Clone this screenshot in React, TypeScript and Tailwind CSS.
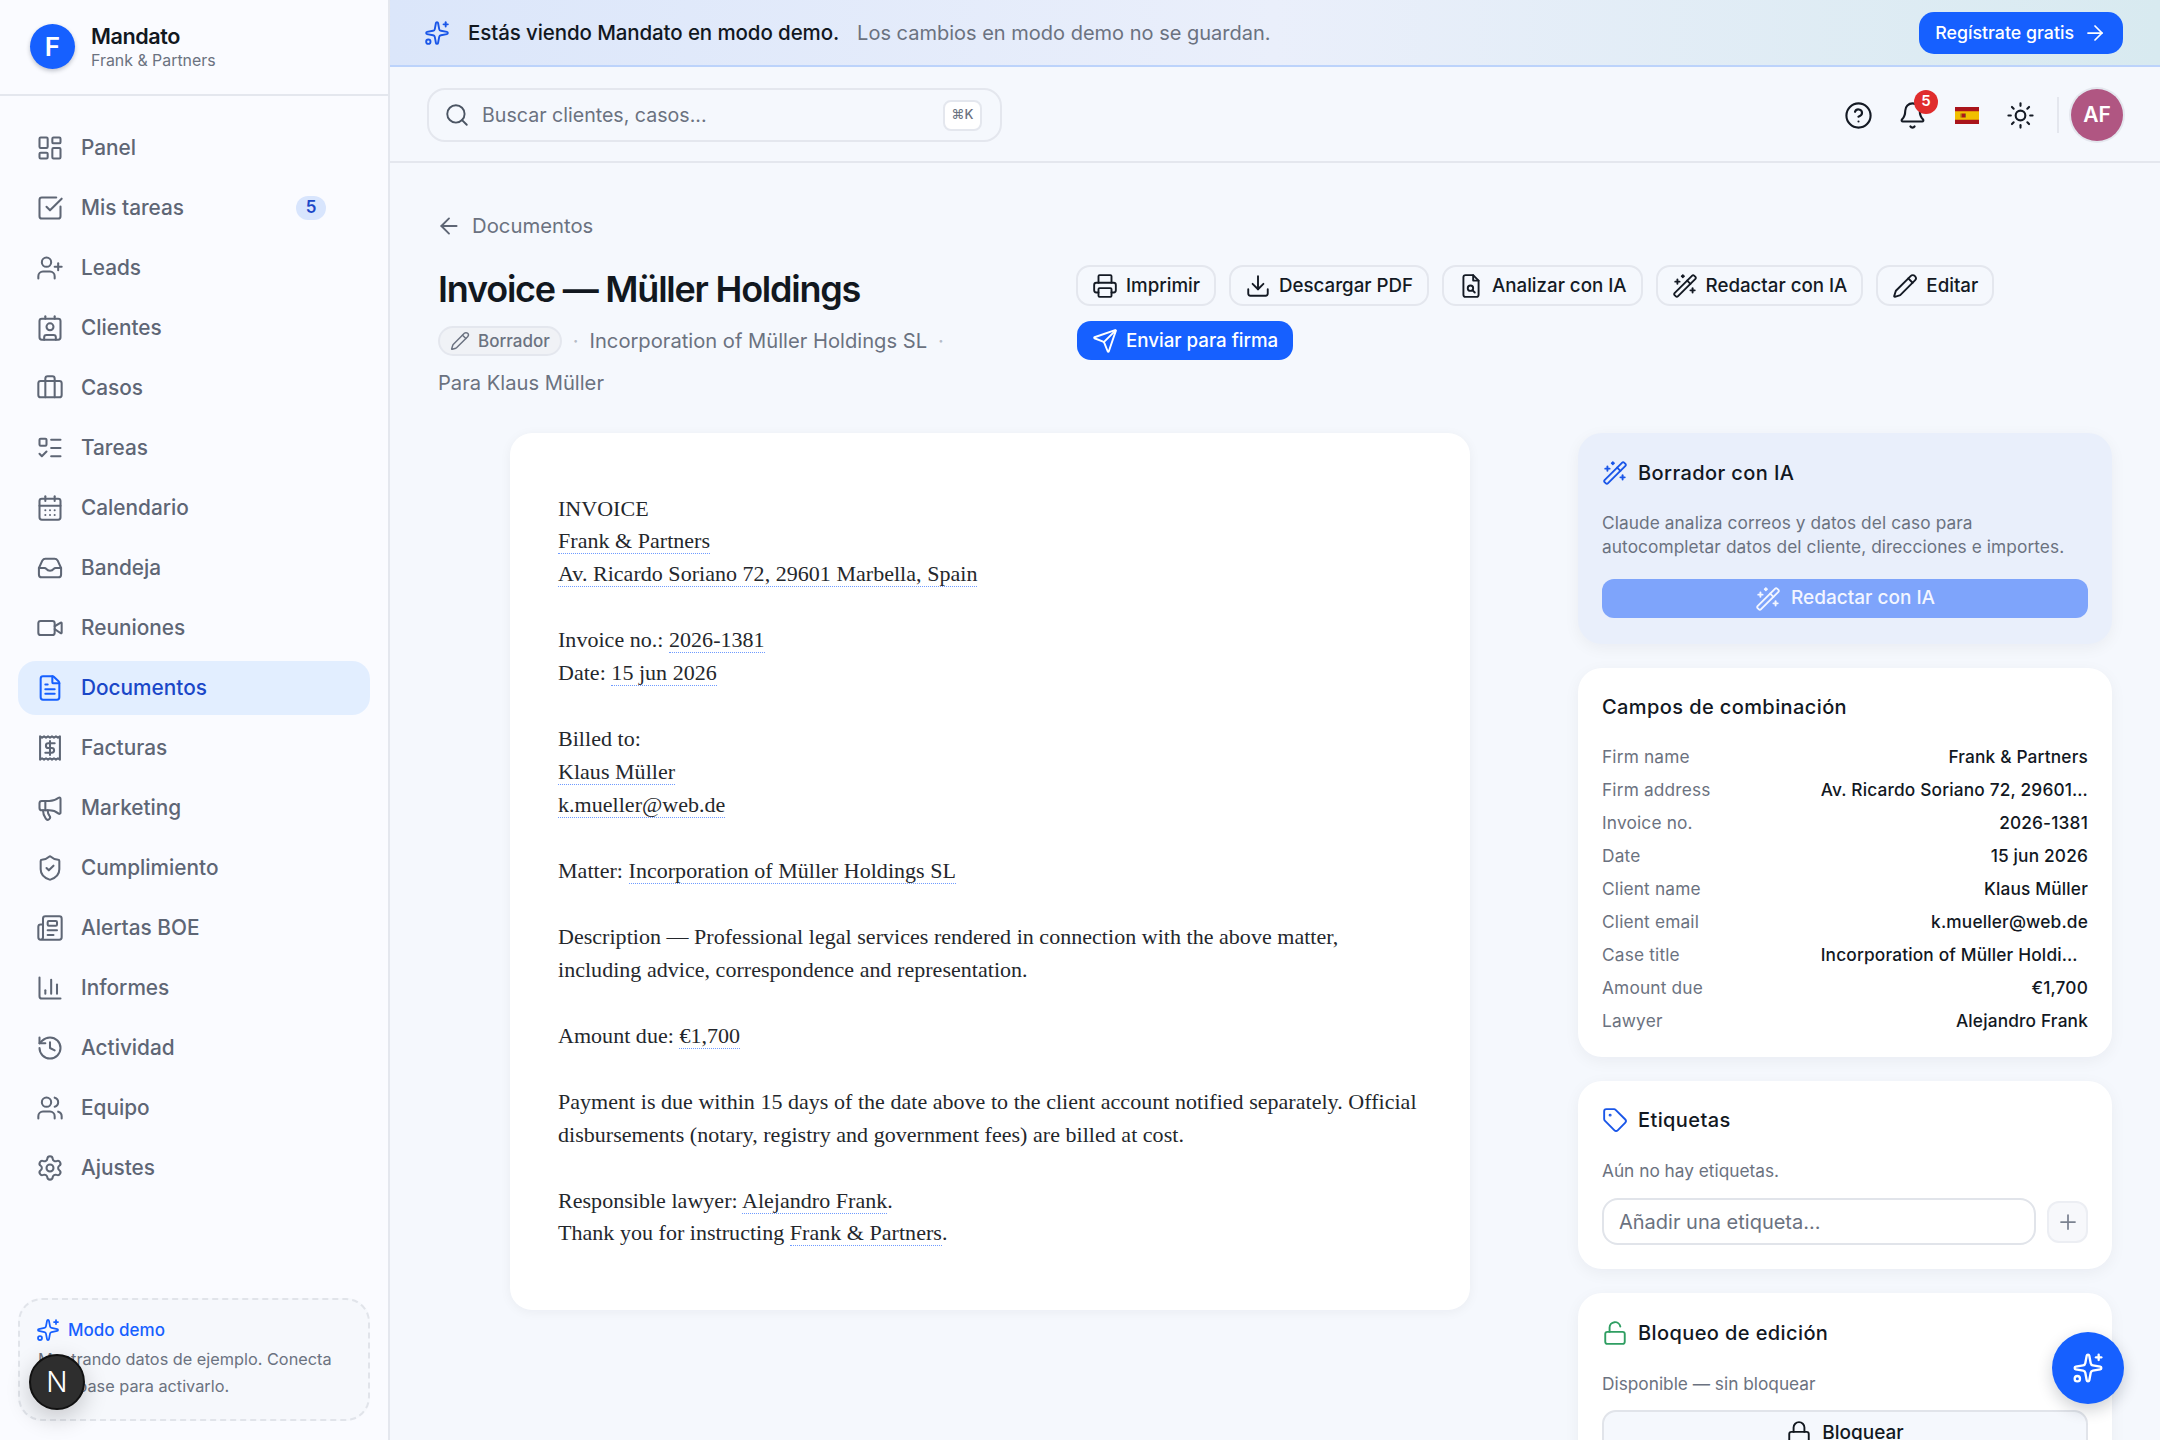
import {
  ArrowLeft,
  ArrowRight,
  Bell,
  Briefcase,
  CalendarDays,
  ChartColumn,
  CircleHelp,
  Contact,
  Download,
  FileText,
  History,
  LayoutDashboard,
  ListTodo,
  Lock,
  LockOpen,
  Megaphone,
  Newspaper,
  Pencil,
  Plus,
  Printer,
  Search,
  Send,
  Settings,
  ShieldCheck,
  Sparkles,
  SquareCheckBig,
  Sun,
  Tag,
  UserPlus,
  Users,
  Video,
  WandSparkles,
} from "lucide-react";
import type { ReactNode, SVGProps } from "react";

function InboxIcon(props: SVGProps<SVGSVGElement>) {
  return (
    <svg viewBox="0 0 24 24" fill="none" stroke="currentColor" strokeWidth={1.75} strokeLinecap="round" strokeLinejoin="round" {...props}>
      <path d="M2.5 12v5.5a2.5 2.5 0 0 0 2.5 2.5h14a2.5 2.5 0 0 0 2.5-2.5V12l-3-6.5A3 3 0 0 0 15.8 4H8.2a3 3 0 0 0-2.7 1.5L2.5 12Z" />
      <path d="M2.5 12h4.7a2 2 0 0 1 1.6.8 4 4 0 0 0 6.4 0 2 2 0 0 1 1.6-.8h4.7" />
    </svg>
  );
}

function ReceiptIcon(props: SVGProps<SVGSVGElement>) {
  return (
    <svg viewBox="0 0 24 24" fill="none" stroke="currentColor" strokeWidth={1.75} strokeLinecap="round" strokeLinejoin="round" {...props}>
      <path d="M3.5 2l1.7 1.2L6.9 2l1.7 1.2L10.3 2 12 3.2 13.7 2l1.7 1.2L17.1 2l1.7 1.2L20.5 2v20l-1.7-1.2-1.7 1.2-1.7-1.2-1.7 1.2L12 20.8 10.3 22l-1.7-1.2L6.9 22l-1.7-1.2L3.5 22Z" />
      <path d="M16 8h-5.5a2 2 0 0 0 0 4h3a2 2 0 0 1 0 4H8" />
      <path d="M12 6v12" />
    </svg>
  );
}

function AnalyzeIcon(props: SVGProps<SVGSVGElement>) {
  return (
    <svg viewBox="0 0 24 24" fill="none" stroke="currentColor" strokeWidth={1.75} strokeLinecap="round" strokeLinejoin="round" {...props}>
      <path d="M14 2H7a2 2 0 0 0-2 2v16a2 2 0 0 0 2 2h10a2 2 0 0 0 2-2V7Z" />
      <path d="M14 2v5h5" />
      <circle cx="11.5" cy="14" r="2.5" />
      <path d="M13.5 16l2 2" />
    </svg>
  );
}

function SpainFlag() {
  return (
    <svg viewBox="0 0 24 17" className="h-[17px] w-6">
      <rect width="24" height="17" fill="#aa151b" />
      <rect y="4.25" width="24" height="8.5" fill="#f1bf00" />
      <rect x="6.5" y="6.5" width="3.5" height="4" fill="#ad1519" />
      <rect x="5.5" y="6.5" width="1" height="4" fill="#8a6d1c" />
      <rect x="10" y="6.5" width="1" height="4" fill="#8a6d1c" />
    </svg>
  );
}

const navItems = [
  { label: "Panel", icon: LayoutDashboard },
  { label: "Mis tareas", icon: SquareCheckBig, count: 5 },
  { label: "Leads", icon: UserPlus },
  { label: "Clientes", icon: Contact },
  { label: "Casos", icon: Briefcase },
  { label: "Tareas", icon: ListTodo },
  { label: "Calendario", icon: CalendarDays },
  { label: "Bandeja", icon: InboxIcon },
  { label: "Reuniones", icon: Video },
  { label: "Documentos", icon: FileText, active: true },
  { label: "Facturas", icon: ReceiptIcon },
  { label: "Marketing", icon: Megaphone },
  { label: "Cumplimiento", icon: ShieldCheck },
  { label: "Alertas BOE", icon: Newspaper },
  { label: "Informes", icon: ChartColumn },
  { label: "Actividad", icon: History },
  { label: "Equipo", icon: Users },
  { label: "Ajustes", icon: Settings },
];

const actions = [
  { label: "Imprimir", icon: Printer },
  { label: "Descargar PDF", icon: Download },
  { label: "Analizar con IA", icon: AnalyzeIcon },
  { label: "Redactar con IA", icon: WandSparkles },
  { label: "Editar", icon: Pencil },
];

const mergeFields = [
  ["Firm name", "Frank & Partners"],
  ["Firm address", "Av. Ricardo Soriano 72, 29601 Marbella, Spain"],
  ["Invoice no.", "2026-1381"],
  ["Date", "15 jun 2026"],
  ["Client name", "Klaus Müller"],
  ["Client email", "k.mueller@web.de"],
  ["Case title", "Incorporation of Müller Holdings SL"],
  ["Amount due", "€1,700"],
  ["Lawyer", "Alejandro Frank"],
];

function Sidebar() {
  return (
    <aside className="flex h-full w-[390px] shrink-0 flex-col border-r-2 border-[#e4e7ee] bg-[#fafbff]">
      <div className="flex h-[96px] shrink-0 items-center gap-4 border-b-2 border-[#e4e7ee] pb-[2px] pl-[30px]">
        <div className="flex size-[45px] items-center justify-center rounded-full bg-[#1660ff] text-[26px] font-semibold text-white shadow-[0_2px_4px_rgba(15,23,42,0.25)]">
          F
        </div>
        <div className="pt-[3px]">
          <div className="text-[21.6px] leading-[26px] font-semibold tracking-[-0.02em] text-[#12181f]">Mandato</div>
          <div className="mt-[1px] text-[15.9px] leading-[22px] text-[#6b7280]">Frank &amp; Partners</div>
        </div>
      </div>

      <nav className="flex flex-col gap-[6px] px-[18px] pt-[24.5px]">
        {navItems.map((item) => (
          <div
            key={item.label}
            className={
              item.active
                ? "flex h-[54px] items-center gap-[17px] rounded-[18px] bg-[#e2eeff] pl-[18px] text-[20.8px] font-medium text-[#1a47c8]"
                : "flex h-[54px] items-center gap-[17px] rounded-[18px] pl-[18px] text-[20.8px] font-medium text-[#5e6675]"
            }
          >
            <item.icon className={item.active ? "size-[28px] text-[#1660ff]" : "size-[28px]"} strokeWidth={1.75} />
            <span>{item.label}</span>
            {item.count && (
              <span className="ml-[95px] flex h-6 w-[30px] items-center justify-center rounded-full bg-[#d8e5fd] text-[17px] font-semibold text-[#1a47c8]">
                {item.count}
              </span>
            )}
          </div>
        ))}
      </nav>

      <div className="mx-[18px] mt-auto mb-[19px] h-[123px] rounded-[24px] border-2 border-dashed border-[#e1e4ea] bg-[#f6f8fc] px-[18px] pt-[18px]">
        <div className="flex items-center gap-2 text-[17px] leading-6 font-medium text-[#1660ff]">
          <Sparkles className="-ml-[2px] size-6" strokeWidth={1.75} />
          Modo demo
        </div>
        <p className="mt-1 text-[16.3px] leading-[27px] text-[#6b7280]">
          Mostrando datos de ejemplo. Conecta Supabase para activarlo.
        </p>
      </div>
    </aside>
  );
}

function Banner() {
  return (
    <div className="flex h-[67px] shrink-0 items-center border-b-2 border-[#bcd3fb] bg-gradient-to-r from-[#dbe6fa] via-[#eaeffb] to-[#d8eaf0] pt-px pr-[37px] pl-[34px]">
      <Sparkles className="size-[26px] text-[#1a56e8]" strokeWidth={1.75} />
      <span className="ml-[18px] text-[20.5px] font-medium tracking-[-0.005em] text-[#12181f]">
        Estás viendo Mandato en modo demo.
      </span>
      <span className="ml-[18px] text-[20px] text-[#6b7280]">Los cambios en modo demo no se guardan.</span>
      <button className="ml-auto flex h-[42px] items-center gap-[9px] rounded-[15px] bg-[#1660ff] px-[16px] text-[17.8px] font-medium text-white">
        Regístrate gratis
        <ArrowRight className="size-6" strokeWidth={1.75} />
      </button>
    </div>
  );
}

function Topbar() {
  return (
    <div className="flex h-[96px] shrink-0 items-center border-b-2 border-[#e4e7ee] px-[37px] pt-[2px]">
      <div className="flex h-[54px] w-[575px] items-center rounded-[18px] border-2 border-[#e4e7ee] pr-[18px] pl-[15px]">
        <Search className="size-[26px] text-[#4b5563]" strokeWidth={1.75} />
        <span className="ml-[12px] pt-[2px] text-[19.6px] text-[#6b7280]">Buscar clientes, casos...</span>
        <span className="ml-auto flex h-[31px] w-[39px] items-center justify-center rounded-[8px] border-2 border-[#e4e7ee] bg-white text-[13px] font-medium text-[#6b7280]">
          ⌘K
        </span>
      </div>

      <div className="ml-auto flex items-center gap-[25px] text-[#141a24]">
        <CircleHelp className="size-[29px]" strokeWidth={1.75} />
        <div className="relative">
          <Bell className="size-[29px]" strokeWidth={1.75} />
          <span className="absolute -top-[11px] -right-[11px] flex size-6 items-center justify-center rounded-full bg-[#e02d2d] text-[15px] font-semibold text-white">
            5
          </span>
        </div>
        <div className="flex w-[29px] justify-center">
          <SpainFlag />
        </div>
        <Sun className="size-[29px]" strokeWidth={1.75} />
      </div>
      <div className="mr-[12px] ml-[22px] h-9 w-[2px] bg-[#e4e7ee]" />
      <div className="flex size-[52px] items-center justify-center rounded-full bg-[#b05682] text-[21px] font-semibold text-white ring-2 ring-[#e4e7ee]">
        AF
      </div>
    </div>
  );
}

function Field({ children }: { children: ReactNode }) {
  return <span className="border-b-[1.5px] border-dotted border-[#6f9bff]">{children}</span>;
}

function DocumentSheet() {
  return (
    <div className="mx-auto h-[877px] w-[960px] rounded-[22px] bg-white px-12 pt-[59.5px] font-['Liberation_Serif',Georgia,serif] text-[22px] leading-[32.95px] tracking-[0.0015em] text-[#24272c] shadow-[0_2px_12px_rgba(15,23,42,0.05)]">
      <div className="whitespace-pre-wrap">
        <div>INVOICE</div>
        <div><Field>Frank &amp; Partners</Field></div>
        <div><Field>Av. Ricardo Soriano 72, 29601 Marbella, Spain</Field></div>
        <div>&nbsp;</div>
        <div>Invoice no.: <Field>2026-1381</Field></div>
        <div>Date: <Field>15 jun 2026</Field></div>
        <div>&nbsp;</div>
        <div>Billed to:</div>
        <div><Field>Klaus Müller</Field></div>
        <div><Field>k.mueller@web.de</Field></div>
        <div>&nbsp;</div>
        <div>Matter: <Field>Incorporation of Müller Holdings SL</Field></div>
        <div>&nbsp;</div>
        <div>Description — Professional legal services rendered in connection with the above matter, including advice, correspondence and representation.</div>
        <div>&nbsp;</div>
        <div>Amount due: <Field>€1,700</Field></div>
        <div>&nbsp;</div>
        <div>Payment is due within 15 days of the date above to the client account notified separately. Official disbursements (notary, registry and government fees) are billed at cost.</div>
        <div>&nbsp;</div>
        <div>Responsible lawyer: <Field>Alejandro Frank</Field>.</div>
        <div>Thank you for instructing <Field>Frank &amp; Partners</Field>.</div>
      </div>
    </div>
  );
}

function Card({ children, className }: { children: ReactNode; className?: string }) {
  return (
    <div className={`rounded-[24px] px-6 shadow-[0_4px_16px_rgba(15,23,42,0.05)] ${className ?? "bg-white"}`}>
      {children}
    </div>
  );
}

function CardTitle({ icon, children }: { icon?: ReactNode; children: ReactNode }) {
  return (
    <div className="flex h-[32px] items-center gap-[10px] text-[20px] font-medium tracking-[0.02em] text-[#12181f]">
      {icon}
      {children}
    </div>
  );
}

function RightColumn() {
  return (
    <div className="flex w-[534px] shrink-0 flex-col gap-6">
      <Card className="h-[211px] bg-[#e9effb] pt-6">
        <CardTitle icon={<WandSparkles className="size-[26px] text-[#1a56e8]" strokeWidth={1.75} />}>Borrador con IA</CardTitle>
        <p className="mt-[22px] text-[17.28px] leading-6 tracking-[0.005em] text-[#6b7280]">
          Claude analiza correos y datos del caso para
          <br />
          autocompletar datos del cliente, direcciones e importes.
        </p>
        <button className="mt-5 flex h-[39px] w-full items-center justify-center gap-[10px] rounded-[12px] bg-[#7ea4fb] text-[19px] font-medium text-[#f3f6ff]">
          <WandSparkles className="size-[26px]" strokeWidth={1.75} />
          Redactar con IA
        </button>
      </Card>

      <Card className="h-[389px] bg-white pt-[23px]">
        <CardTitle>Campos de combinación</CardTitle>
        <div className="mt-[22px] flex flex-col gap-[9px]">
          {mergeFields.map(([label, value]) => (
            <div key={label} className="flex h-6 items-center justify-between text-[17.28px] leading-6 tracking-[0.01em]">
              <span className="text-[#6b7280]">{label}</span>
              <span className="max-w-[55%] truncate text-right font-medium text-[#12181f]">{value}</span>
            </div>
          ))}
        </div>
      </Card>

      <Card className="h-[188px] bg-white pt-[23px]">
        <CardTitle icon={<Tag className="size-[26px] text-[#1a56e8]" strokeWidth={1.75} />}>Etiquetas</CardTitle>
        <p className="mt-[23px] text-[17.28px] leading-6 text-[#6b7280]">Aún no hay etiquetas.</p>
        <div className="mt-[15px] flex items-center gap-[11px]">
          <div className="flex h-[47px] flex-1 items-center rounded-[16px] border-2 border-[#e1e4ea] px-[15px] text-[20px] text-[#6b7280]">
            Añadir una etiqueta...
          </div>
          <div className="flex h-[42px] w-[41px] items-center justify-center rounded-[12px] border-2 border-[#eceef3] bg-[#f7f8fb] text-[#7b8290]">
            <Plus className="size-[24px]" strokeWidth={1.75} />
          </div>
        </div>
      </Card>

      <Card className="h-[200px] bg-white pt-6">
        <CardTitle icon={<LockOpen className="size-[26px] text-[#2f9e62]" strokeWidth={1.75} />}>Bloqueo de edición</CardTitle>
        <p className="mt-[23px] text-[17.28px] leading-6 text-[#6b7280]">Disponible — sin bloquear</p>
        <button className="mt-[14px] flex h-[46px] w-full items-center justify-center gap-[10px] rounded-[14px] border-2 border-[#e1e4ea] bg-[#f5f8fd] text-[19px] font-medium text-[#12181f]">
          <Lock className="size-[26px]" strokeWidth={1.75} />
          Bloquear
        </button>
      </Card>
    </div>
  );
}

export default function App() {
  return (
    <div className="relative flex h-[1440px] w-[2160px] overflow-hidden bg-[#f5f8fd] font-['Inter',sans-serif]">
      <Sidebar />

      <div className="flex min-w-0 flex-1 flex-col">
        <Banner />
        <Topbar />

        <main className="min-h-0 flex-1 overflow-hidden px-12 pt-12">
          <div className="-ml-[2px] flex h-[30px] items-center gap-[10px] text-[20.3px] text-[#6b7280]">
            <ArrowLeft className="size-[26px] text-[#5e6675]" strokeWidth={1.75} />
            Documentos
          </div>

          <div className="mt-6 flex h-[133px] gap-6">
            <div className="w-[614px] shrink-0">
              <h1 className="h-12 text-[36px] leading-[48px] font-semibold tracking-[-0.034em] text-[#12181f]">
                Invoice — Müller Holdings
              </h1>
              <div className="mt-[13px] flex flex-wrap items-center gap-x-[11px] gap-y-[12px] text-[20.16px] leading-[30px] text-[#6b7280]">
                <span className="flex h-[30px] items-center gap-2 rounded-full border-2 border-[#e4e7ee] bg-[#f0f2f6] px-[10px] text-[17px] font-medium">
                  <Pencil className="size-[20px]" strokeWidth={1.75} />
                  Borrador
                </span>
                <span className="text-[#b6bcc7]">·</span>
                <span>Incorporation of Müller Holdings SL</span>
                <span className="text-[#b6bcc7]">·</span>
                <span>Para Klaus Müller</span>
              </div>
            </div>

            <div className="flex min-w-0 flex-1 flex-wrap content-start gap-x-[13px] gap-y-[15px]">
              {actions.map((action) => (
                <button
                  key={action.label}
                  className="flex h-[41px] items-center gap-2 rounded-[14px] border-2 border-[#e4e7ee] px-[14px] text-[18.72px] font-medium text-[#141a24]"
                >
                  <action.icon className="size-[26px]" strokeWidth={1.75} />
                  <span className="pt-[2px]">{action.label}</span>
                </button>
              ))}
              <button className="ml-px flex h-[39px] items-center gap-2 rounded-[14px] bg-[#1660ff] px-[15px] text-[18.72px] font-medium text-white">
                <Send className="size-[26px]" strokeWidth={1.75} />
                <span className="pt-px">Enviar para firma</span>
              </button>
            </div>
          </div>

          <div className="mt-[35px] flex gap-[36px]">
            <div className="min-w-0 flex-1">
              <DocumentSheet />
            </div>
            <RightColumn />
          </div>
        </main>
      </div>

      {/* dev badge + assistant button float over everything */}
      <div className="absolute top-[1354px] left-[29px] flex size-[56px] items-center justify-center rounded-full border-2 border-[#111] bg-[#2e2e2e] text-[28px] font-light text-white shadow-[0_8px_24px_rgba(0,0,0,0.2)]">
        N
      </div>
      <div className="absolute top-[1332px] left-[2052px] flex size-[72px] items-center justify-center rounded-full bg-[#1660ff] text-white shadow-[0_6px_16px_rgba(15,23,42,0.2)]">
        <Sparkles className="size-8" strokeWidth={1.75} />
      </div>
    </div>
  );
}
